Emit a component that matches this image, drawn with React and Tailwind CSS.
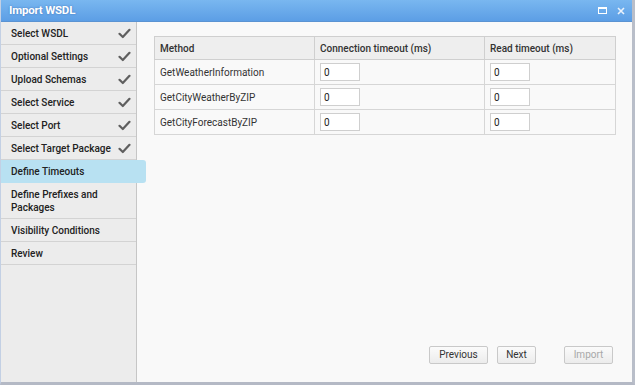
const steps = [
  { label: "Select WSDL", done: true },
  { label: "Optional Settings", done: true },
  { label: "Upload Schemas", done: true },
  { label: "Select Service", done: true },
  { label: "Select Port", done: true },
  { label: "Select Target Package", done: true },
  { label: "Define Timeouts", active: true },
  { label: "Define Prefixes and Packages", tall: true },
  { label: "Visibility Conditions" },
  { label: "Review" },
];

const methods = ["GetWeatherInformation", "GetCityWeatherByZIP", "GetCityForecastByZIP"];

function Check() {
  return (
    <svg width="13" height="11" viewBox="0 0 13 11" className="shrink-0">
      <path d="M1.5 5.8 L4.8 9 L11.5 1.8" fill="none" stroke="#5f5f5f" strokeWidth="2.2" strokeLinecap="round" strokeLinejoin="round" />
    </svg>
  );
}

function Btn({ children, disabled, w }) {
  return (
    <button
      className={`${w} h-[18px] rounded-[2px] border border-[#c9c9c9] bg-gradient-to-b from-[#fbfbfb] to-[#ececec] text-[10px] leading-none ${
        disabled ? "text-[#a8a8a8]" : "text-[#333]"
      }`}
    >
      {children}
    </button>
  );
}

function TimeoutInput() {
  return (
    <input
      readOnly
      value="0"
      className="block w-[40px] h-[18px] bg-white border border-[#cfcfcf] px-[3px] text-[10px] text-[#222] outline-none"
    />
  );
}

export default function App() {
  return (
    <div
      className="w-[635px] h-[385px] flex flex-col border-l border-r-[3px] border-b-[3px] border-l-[#c3d0e4] border-r-[#b9bec9] border-b-[#b4b9c5] bg-[#f9f9f9] overflow-hidden"
      style={{ fontFamily: "Roboto, 'Liberation Sans', sans-serif" }}
    >
      {/* title bar */}
      <div className="h-[22px] shrink-0 flex items-center justify-between pl-[8px] pr-[7px] bg-gradient-to-b from-[#79b7f0] to-[#5c9ee5] border-b border-[#5b93d2]">
        <span className="text-white text-[11.5px] font-bold tracking-[-0.2px] [text-shadow:0_0_2px_rgba(60,110,180,0.9)]">Import WSDL</span>
        <div className="flex items-center gap-[10px]">
          <div className="w-[9px] h-[7px] border border-white border-t-2" />
          <svg width="8" height="8" viewBox="0 0 8 8">
            <path d="M1 1 L7 7 M7 1 L1 7" stroke="#eaf2fc" strokeWidth="1.6" />
          </svg>
        </div>
      </div>

      <div className="flex flex-1 min-h-0">
        {/* sidebar */}
        <div className="w-[136px] shrink-0 bg-[#ececec] border-r border-[#c6c6c6] flex flex-col">
          {steps.map((s) =>
            s.active ? (
              <div
                key={s.label}
                className="relative z-10 w-[145px] h-[23px] flex items-center pl-[10px] bg-[#b8e1f2] rounded-r-[3px] text-[10px] font-medium text-[#222]"
              >
                {s.label}
              </div>
            ) : (
              <div
                key={s.label}
                className={`flex items-center justify-between pl-[10px] pr-[5px] border-b border-[#d3d3d3] text-[10px] font-medium text-[#222] leading-[13px] ${
                  s.tall ? "h-[36px]" : "h-[23px] whitespace-nowrap"
                }`}
              >
                <span className={s.tall ? "w-[90px]" : ""}>{s.label}</span>
                {s.done && <Check />}
              </div>
            )
          )}
        </div>

        {/* content */}
        <div className="flex-1 flex flex-col pt-[14px] pl-[17px] pr-[16px] pb-[18px]">
          <table className="w-[462px] border-collapse text-[10px] text-[#333]">
            <thead>
              <tr className="h-[23px] bg-[#eeeeee]">
                <th className="w-[160px] border border-[#cfcfcf] text-left font-medium pl-[5px]">Method</th>
                <th className="w-[170px] border border-[#cfcfcf] text-left font-medium pl-[5px]">Connection timeout (ms)</th>
                <th className="border border-[#cfcfcf] text-left font-medium pl-[5px]">Read timeout (ms)</th>
              </tr>
            </thead>
            <tbody>
              {methods.map((m) => (
                <tr key={m} className="h-[25px]">
                  <td className="border border-[#d6d6d6] pl-[5px]">{m}</td>
                  <td className="border border-[#d6d6d6] pl-[5px]">
                    <TimeoutInput />
                  </td>
                  <td className="border border-[#d6d6d6] pl-[5px]">
                    <TimeoutInput />
                  </td>
                </tr>
              ))}
            </tbody>
          </table>

          <div className="mt-auto flex justify-end pr-[3px]">
            <Btn w="w-[59px]">Previous</Btn>
            <Btn w="w-[39px] ml-[9px]">Next</Btn>
            <Btn w="w-[49px] ml-[28px]" disabled>Import</Btn>
          </div>
        </div>
      </div>
    </div>
  );
}
